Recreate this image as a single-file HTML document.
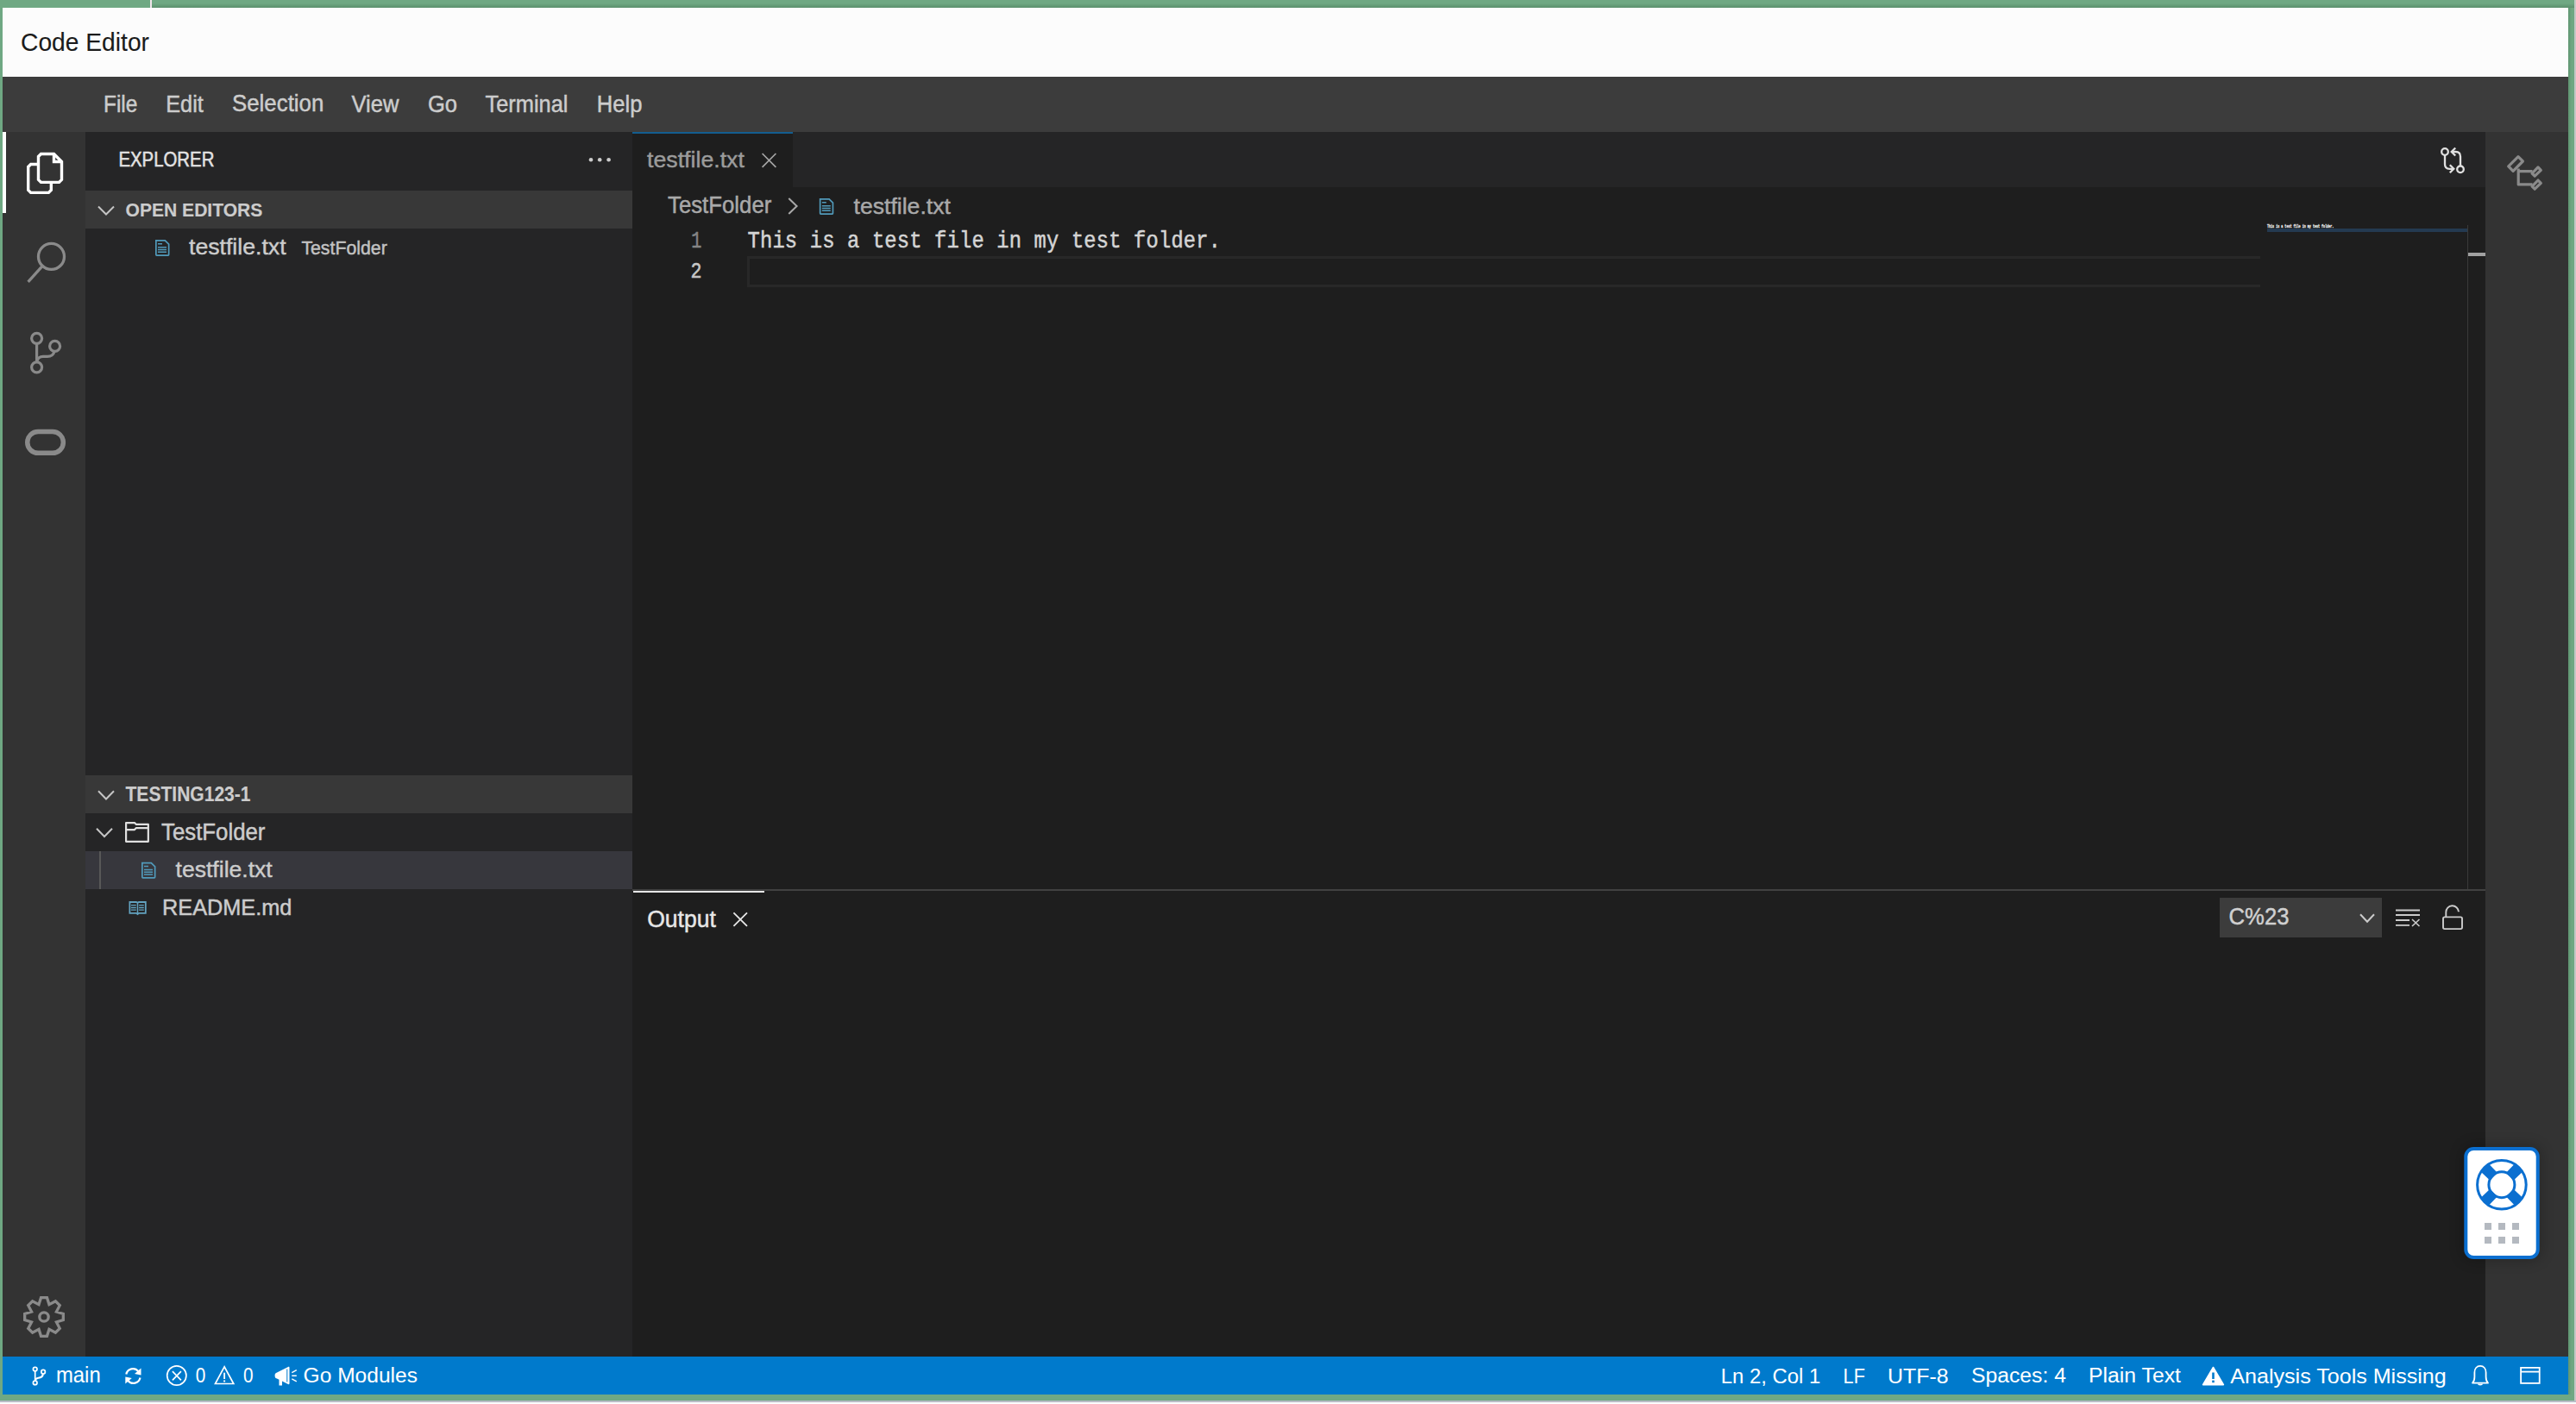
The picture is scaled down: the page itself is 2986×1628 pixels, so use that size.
<!DOCTYPE html>
<html><head><meta charset="utf-8"><title>Code Editor</title>
<style>
html,body{margin:0;padding:0;width:2986px;height:1628px;overflow:hidden;background:#6fa883}
body{position:relative;font-family:"Liberation Sans",sans-serif}
</style></head><body>
<div style="position:absolute;left:0px;top:0px;width:2986px;height:1628px;background:#6fa883;"></div><div style="position:absolute;left:0px;top:1624px;width:2986px;height:2px;background:#b9bdc7;"></div><div style="position:absolute;left:0px;top:1626px;width:2986px;height:2px;background:#fcfcfc;"></div><div style="position:absolute;left:2984px;top:0px;width:2px;height:1624px;background:#c4c8c6;"></div><div style="position:absolute;left:176px;top:4px;width:2808px;height:5px;background:linear-gradient(to bottom, rgba(40,80,50,0) 0%, rgba(40,80,50,0.28) 100%);"></div><div style="position:absolute;left:2977px;top:9px;width:4px;height:1608px;background:linear-gradient(to right, rgba(40,80,50,0.22) 0%, rgba(40,80,50,0) 100%);"></div><div style="position:absolute;left:174px;top:0px;width:2px;height:9px;background:#f1e5eb;"></div><div style="position:absolute;left:3px;top:9px;width:2974px;height:80px;background:#fcfcfc;"></div><div style="position:absolute;left:3px;top:89px;width:2974px;height:64px;background:#3c3c3c;"></div><div style="position:absolute;left:3px;top:153px;width:96px;height:1420px;background:#333333;"></div><div style="position:absolute;left:3px;top:153px;width:4px;height:94px;background:#ffffff;"></div><div style="position:absolute;left:99px;top:153px;width:634px;height:1420px;background:#252526;"></div><div style="position:absolute;left:99px;top:221px;width:634px;height:44px;background:#383838;"></div><div style="position:absolute;left:99px;top:899px;width:634px;height:44px;background:#383838;"></div><div style="position:absolute;left:99px;top:987px;width:634px;height:44px;background:#37373d;"></div><div style="position:absolute;left:115px;top:987px;width:2px;height:44px;background:#585858;"></div><div style="position:absolute;left:733px;top:153px;width:2148px;height:64px;background:#252526;"></div><div style="position:absolute;left:733px;top:153px;width:186px;height:64px;background:#1e1e1e;"></div><div style="position:absolute;left:733px;top:153px;width:186px;height:2px;background:#135d8f;"></div><div style="position:absolute;left:733px;top:217px;width:2148px;height:814px;background:#1e1e1e;"></div><div style="position:absolute;left:866px;top:297px;width:1754px;height:36px;background:transparent;box-sizing:border-box;border:3px solid #282828;border-right:none"></div><div style="position:absolute;left:2628px;top:265px;width:232px;height:4px;background:#243a51;"></div><div style="position:absolute;left:2860px;top:261px;width:1px;height:770px;background:#3a3a3a;"></div><div style="position:absolute;left:2861px;top:293px;width:20px;height:4px;background:#a0a0a0;"></div><div style="position:absolute;left:733px;top:1031px;width:2148px;height:2px;background:#414141;"></div><div style="position:absolute;left:733px;top:1033px;width:2148px;height:540px;background:#1e1e1e;"></div><div style="position:absolute;left:734px;top:1033px;width:152px;height:2px;background:#e7e7e7;"></div><div style="position:absolute;left:2573px;top:1041px;width:188px;height:46px;background:#3c3c3c;"></div><div style="position:absolute;left:2881px;top:153px;width:96px;height:1420px;background:#333333;"></div><div style="position:absolute;left:3px;top:1573px;width:2974px;height:44px;background:#007acc;"></div><div style="position:absolute;left:2856px;top:1330px;width:88px;height:130px;background:transparent;border-radius:11px;box-shadow:0 0 14px 4px rgba(0,0,0,0.18)"></div><span style="position:absolute;left:24.00px;top:35.11px;font-family:'Liberation Sans', sans-serif;font-weight:400;font-size:28.220px;line-height:28.220px;color:#1b1b1b;white-space:pre;transform:scaleY(1.0309);transform-origin:0 23.89px;-webkit-text-stroke:0.1px #1b1b1b;">Code Editor</span><span style="position:absolute;left:120.00px;top:109.51px;font-family:'Liberation Sans', sans-serif;font-weight:400;font-size:24.434px;line-height:24.434px;color:#cccccc;white-space:pre;transform:scaleY(1.1430);transform-origin:0 20.69px;-webkit-text-stroke:0.45px #cccccc;">File</span><span style="position:absolute;left:192.20px;top:108.77px;font-family:'Liberation Sans', sans-serif;font-weight:400;font-size:25.312px;line-height:25.312px;color:#cccccc;white-space:pre;transform:scaleY(1.1033);transform-origin:0 21.43px;-webkit-text-stroke:0.45px #cccccc;">Edit</span><span style="position:absolute;left:269.00px;top:108.31px;font-family:'Liberation Sans', sans-serif;font-weight:400;font-size:25.857px;line-height:25.857px;color:#cccccc;white-space:pre;transform:scaleY(1.0801);transform-origin:0 21.89px;-webkit-text-stroke:0.45px #cccccc;">Selection</span><span style="position:absolute;left:407.50px;top:108.57px;font-family:'Liberation Sans', sans-serif;font-weight:400;font-size:25.552px;line-height:25.552px;color:#cccccc;white-space:pre;transform:scaleY(1.0930);transform-origin:0 21.63px;-webkit-text-stroke:0.45px #cccccc;">View</span><span style="position:absolute;left:495.90px;top:108.57px;font-family:'Liberation Sans', sans-serif;font-weight:400;font-size:25.543px;line-height:25.543px;color:#cccccc;white-space:pre;transform:scaleY(1.0933);transform-origin:0 21.63px;-webkit-text-stroke:0.45px #cccccc;">Go</span><span style="position:absolute;left:562.50px;top:108.70px;font-family:'Liberation Sans', sans-serif;font-weight:400;font-size:25.397px;line-height:25.397px;color:#cccccc;white-space:pre;transform:scaleY(1.0996);transform-origin:0 21.50px;-webkit-text-stroke:0.45px #cccccc;">Terminal</span><span style="position:absolute;left:691.80px;top:108.55px;font-family:'Liberation Sans', sans-serif;font-weight:400;font-size:25.565px;line-height:25.565px;color:#cccccc;white-space:pre;transform:scaleY(1.0924);transform-origin:0 21.65px;-webkit-text-stroke:0.45px #cccccc;">Help</span><span style="position:absolute;left:137.40px;top:176.13px;font-family:'Liberation Sans', sans-serif;font-weight:400;font-size:20.395px;line-height:20.395px;color:#e2e2e2;white-space:pre;transform:scaleY(1.1482);transform-origin:0 17.27px;-webkit-text-stroke:0.45px #e2e2e2;">EXPLORER</span><span style="position:absolute;left:145.50px;top:233.15px;font-family:'Liberation Sans', sans-serif;font-weight:700;font-size:21.088px;line-height:21.088px;color:#cccccc;white-space:pre;transform:scaleY(1.0829);transform-origin:0 17.85px;-webkit-text-stroke:0.15px #cccccc;">OPEN EDITORS</span><span style="position:absolute;left:219.00px;top:273.22px;font-family:'Liberation Sans', sans-serif;font-weight:400;font-size:26.675px;line-height:26.675px;color:#cccccc;white-space:pre;transform:scaleY(0.9514);transform-origin:0 22.58px;-webkit-text-stroke:0.45px #cccccc;">testfile.txt</span><span style="position:absolute;left:349.40px;top:277.77px;font-family:'Liberation Sans', sans-serif;font-weight:400;font-size:21.296px;line-height:21.296px;color:#c2c2c2;white-space:pre;transform:scaleY(1.0792);transform-origin:0 18.03px;-webkit-text-stroke:0.45px #c2c2c2;">TestFolder</span><span style="position:absolute;left:145.50px;top:911.18px;font-family:'Liberation Sans', sans-serif;font-weight:700;font-size:21.052px;line-height:21.052px;color:#cccccc;white-space:pre;transform:scaleY(1.1193);transform-origin:0 17.82px;-webkit-text-stroke:0.15px #cccccc;">TESTING123-1</span><span style="position:absolute;left:187.00px;top:952.74px;font-family:'Liberation Sans', sans-serif;font-weight:400;font-size:25.817px;line-height:25.817px;color:#cccccc;white-space:pre;transform:scaleY(1.1043);transform-origin:0 21.86px;-webkit-text-stroke:0.45px #cccccc;">TestFolder</span><span style="position:absolute;left:203.50px;top:995.00px;font-family:'Liberation Sans', sans-serif;font-weight:400;font-size:26.580px;line-height:26.580px;color:#cccccc;white-space:pre;transform:scaleY(0.9808);transform-origin:0 22.50px;-webkit-text-stroke:0.45px #cccccc;">testfile.txt</span><span style="position:absolute;left:188.00px;top:1040.27px;font-family:'Liberation Sans', sans-serif;font-weight:400;font-size:25.315px;line-height:25.315px;color:#cccccc;white-space:pre;transform:scaleY(1.0457);transform-origin:0 21.43px;-webkit-text-stroke:0.45px #cccccc;">README.md</span><span style="position:absolute;left:750.00px;top:172.26px;font-family:'Liberation Sans', sans-serif;font-weight:400;font-size:26.746px;line-height:26.746px;color:#9b9b9b;white-space:pre;transform:scaleY(0.9541);transform-origin:0 22.64px;-webkit-text-stroke:0.45px #9b9b9b;">testfile.txt</span><span style="position:absolute;left:774.00px;top:226.46px;font-family:'Liberation Sans', sans-serif;font-weight:400;font-size:25.795px;line-height:25.795px;color:#a9a9a9;white-space:pre;transform:scaleY(1.0883);transform-origin:0 21.84px;-webkit-text-stroke:0.45px #a9a9a9;">TestFolder</span><span style="position:absolute;left:989.50px;top:225.66px;font-family:'Liberation Sans', sans-serif;font-weight:400;font-size:26.627px;line-height:26.627px;color:#a9a9a9;white-space:pre;transform:scaleY(0.9946);transform-origin:0 22.54px;-webkit-text-stroke:0.45px #a9a9a9;">testfile.txt</span><span style="position:absolute;left:801.30px;top:271.55px;font-family:'Liberation Mono', monospace;font-weight:400;font-size:20.167px;line-height:20.167px;color:#858585;white-space:pre;transform:scaleY(1.3349);transform-origin:0 15.45px;-webkit-text-stroke:0.45px #858585;">1</span><span style="position:absolute;left:800.40px;top:305.80px;font-family:'Liberation Mono', monospace;font-weight:400;font-size:21.667px;line-height:21.667px;color:#c6c6c6;white-space:pre;transform:scaleY(1.2214);transform-origin:0 16.60px;-webkit-text-stroke:0.45px #c6c6c6;">2</span><span style="position:absolute;left:866.50px;top:268.71px;font-family:'Liberation Mono', monospace;font-weight:400;font-size:23.876px;line-height:23.876px;color:#d4d4d4;white-space:pre;transform:scaleY(1.1657);transform-origin:0 18.29px;-webkit-text-stroke:0.45px #d4d4d4;letter-spacing:0.12px">This is a test file in my test folder.</span><span style="position:absolute;left:750.20px;top:1052.73px;font-family:'Liberation Sans', sans-serif;font-weight:400;font-size:26.545px;line-height:26.545px;color:#e7e7e7;white-space:pre;transform:scaleY(1.0631);transform-origin:0 22.47px;-webkit-text-stroke:0.45px #e7e7e7;">Output</span><span style="position:absolute;left:2583.60px;top:1051.49px;font-family:'Liberation Sans', sans-serif;font-weight:400;font-size:25.638px;line-height:25.638px;color:#d0d0d0;white-space:pre;transform:scaleY(1.0893);transform-origin:0 21.71px;-webkit-text-stroke:0.45px #d0d0d0;">C%23</span><span style="position:absolute;left:65.00px;top:1583.30px;font-family:'Liberation Sans', sans-serif;font-weight:400;font-size:23.852px;line-height:23.852px;color:#ffffff;white-space:pre;transform:scaleY(1.0730);transform-origin:0 20.20px;-webkit-text-stroke:0.05px #ffffff;">main</span><span style="position:absolute;left:226.80px;top:1586.46px;font-family:'Liberation Sans', sans-serif;font-weight:400;font-size:20.721px;line-height:20.721px;color:#ffffff;white-space:pre;transform:scaleY(1.1934);transform-origin:0 17.54px;-webkit-text-stroke:0.05px #ffffff;">0</span><span style="position:absolute;left:281.90px;top:1586.46px;font-family:'Liberation Sans', sans-serif;font-weight:400;font-size:20.721px;line-height:20.721px;color:#ffffff;white-space:pre;transform:scaleY(1.1934);transform-origin:0 17.54px;-webkit-text-stroke:0.05px #ffffff;">0</span><span style="position:absolute;left:351.60px;top:1583.01px;font-family:'Liberation Sans', sans-serif;font-weight:400;font-size:24.553px;line-height:24.553px;color:#ffffff;white-space:pre;transform:scaleY(0.9953);transform-origin:0 20.79px;-webkit-text-stroke:0.05px #ffffff;">Go Modules</span><span style="position:absolute;left:1994.70px;top:1583.75px;font-family:'Liberation Sans', sans-serif;font-weight:400;font-size:23.917px;line-height:23.917px;color:#ffffff;white-space:pre;transform:scaleY(1.0156);transform-origin:0 20.25px;-webkit-text-stroke:0.05px #ffffff;">Ln 2, Col 1</span><span style="position:absolute;left:2136.60px;top:1585.65px;font-family:'Liberation Sans', sans-serif;font-weight:400;font-size:21.670px;line-height:21.670px;color:#ffffff;white-space:pre;transform:scaleY(1.1209);transform-origin:0 18.35px;-webkit-text-stroke:0.05px #ffffff;">LF</span><span style="position:absolute;left:2188.00px;top:1582.87px;font-family:'Liberation Sans', sans-serif;font-weight:400;font-size:24.960px;line-height:24.960px;color:#ffffff;white-space:pre;transform:scaleY(0.9732);transform-origin:0 21.13px;-webkit-text-stroke:0.05px #ffffff;">UTF-8</span><span style="position:absolute;left:2285.00px;top:1583.06px;font-family:'Liberation Sans', sans-serif;font-weight:400;font-size:24.733px;line-height:24.733px;color:#ffffff;white-space:pre;transform:scaleY(0.9821);transform-origin:0 20.94px;-webkit-text-stroke:0.05px #ffffff;">Spaces: 4</span><span style="position:absolute;left:2421.00px;top:1583.02px;font-family:'Liberation Sans', sans-serif;font-weight:400;font-size:24.783px;line-height:24.783px;color:#ffffff;white-space:pre;transform:scaleY(0.9801);transform-origin:0 20.98px;-webkit-text-stroke:0.05px #ffffff;">Plain Text</span><span style="position:absolute;left:2585.30px;top:1582.76px;font-family:'Liberation Sans', sans-serif;font-weight:400;font-size:25.088px;line-height:25.088px;color:#ffffff;white-space:pre;transform:scaleY(0.9856);transform-origin:0 21.24px;-webkit-text-stroke:0.05px #ffffff;">Analysis Tools Missing</span><span style="position:absolute;left:2628px;top:258.6px;font-family:'Liberation Mono',monospace;font-size:3.4px;line-height:6px;color:#dcdcdc;white-space:pre;transform:scaleY(1.35);transform-origin:0 0;-webkit-text-stroke:0.35px #dcdcdc">This is a test file in my test folder.</span>
<svg width="2986" height="1628" viewBox="0 0 2986 1628" style="position:absolute;left:0;top:0"><g fill="none" stroke="#ffffff" stroke-width="3.4" stroke-linejoin="miter"><path d="M47.5 178.45 H62.5 L71.5 187.5 V208.35 L68.5 211.35 H47.5 L44.5 208.35 V181.45 Z"/><path d="M62.5 178.45 V187.5 H71.5"/><path d="M44.5 190.5 H35.7 L32.7 193.5 V220.35 L35.7 223.35 H56.35 L59.35 220.35 V211.35"/></g><g fill="none" stroke="#8a8a8a" stroke-width="3.3"><circle cx="59.5" cy="297.4" r="15"/><path d="M49 308.6 L32.6 326.8"/></g><g fill="none" stroke="#8a8a8a" stroke-width="3.2"><circle cx="42.6" cy="392.3" r="6"/><circle cx="63.6" cy="401.4" r="6"/><circle cx="42.6" cy="425.8" r="6"/><path d="M42.6 398.3 V419.8"/><path d="M63.2 407.4 C62 411.5 59 413.4 55 413.4 H50 C46 413.4 43.5 416 42.8 419"/></g><rect x="31.75" y="500.45" width="41.6" height="24.9" rx="12.45" fill="none" stroke="#8a8a8a" stroke-width="5.5"/><g fill="none" stroke="#8a8a8a" stroke-width="3.3" stroke-linejoin="miter"><path d="M45.03 1512.59 L47.54 1504.67 L54.46 1504.67 L56.97 1512.59 L64.35 1508.76 L69.24 1513.65 L65.41 1521.03 L73.33 1523.54 L73.33 1530.46 L65.41 1532.97 L69.24 1540.35 L64.35 1545.24 L56.97 1541.41 L54.46 1549.33 L47.54 1549.33 L45.03 1541.41 L37.65 1545.24 L32.76 1540.35 L36.59 1532.97 L28.67 1530.46 L28.67 1523.54 L36.59 1521.03 L32.76 1513.65 L37.65 1508.76 Z"/><circle cx="51" cy="1527" r="5.2"/></g><g transform="translate(180 278)" fill="none" stroke="#519aba"><path stroke-width="1.7" d="M0.85 0.85 H11.3 L15.65 5.2 V17.3 C15.65 17.8 15.4 18.15 14.9 18.15 H1.6 C1.1 18.15 0.85 17.8 0.85 17.3 Z"/><path stroke-width="1.5" d="M3 4.7 H8 M3 8.8 H13 M3 11.5 H13 M3 14.2 H13"/></g><g transform="translate(164 999.7)" fill="none" stroke="#519aba"><path stroke-width="1.7" d="M0.85 0.85 H11.3 L15.65 5.2 V17.3 C15.65 17.8 15.4 18.15 14.9 18.15 H1.6 C1.1 18.15 0.85 17.8 0.85 17.3 Z"/><path stroke-width="1.5" d="M3 4.7 H8 M3 8.8 H13 M3 11.5 H13 M3 14.2 H13"/></g><g transform="translate(949.8 230)" fill="none" stroke="#519aba"><path stroke-width="1.7" d="M0.85 0.85 H11.3 L15.65 5.2 V17.3 C15.65 17.8 15.4 18.15 14.9 18.15 H1.6 C1.1 18.15 0.85 17.8 0.85 17.3 Z"/><path stroke-width="1.5" d="M3 4.7 H8 M3 8.8 H13 M3 11.5 H13 M3 14.2 H13"/></g><g fill="none" stroke="#e0e0e0" stroke-width="2.2" stroke-linejoin="round"><path d="M146.1 975.85 V954.05 H156 L157.9 955.95 H171.85 V975.85 Z"/><path d="M146.1 962.1 H156 L157.9 960.1 H171.85"/></g><g fill="none" stroke="#62a2bf"><path stroke-width="1.8" d="M150.4 1046 H158 L159.5 1046.8 L161 1046 H168.8 V1058.85 H161 L159.5 1060 L158 1058.85 H150.4 Z"/><path stroke-width="1.5" d="M159.5 1047 V1059"/><path stroke-width="1.3" d="M152 1049.7 H157.8 M152 1052.5 H157.8 M152 1055.1 H157.8 M161.1 1049.7 H166.8 M161.1 1052.5 H166.8 M161.1 1055.1 H166.8"/></g><g fill="none" stroke="#c5c5c5" stroke-width="2"><path d="M114 239.5 L123 248.5 L132 239.5"/><path d="M114 917.3 L123 926.5 L132 917.3"/><path d="M112 960.7 L121 970 L130 960.7"/></g><path d="M2736 1060.3 L2744 1068.8 L2752 1060.3" fill="none" stroke="#cccccc" stroke-width="2"/><g fill="#cccccc"><circle cx="685" cy="185.2" r="2.3"/><circle cx="695.2" cy="185.2" r="2.3"/><circle cx="705.6" cy="185.2" r="2.3"/></g><path d="M914.3 230 L923.6 239 L914.3 248" fill="none" stroke="#a9a9a9" stroke-width="2"/><path d="M883.6 178 L899.4 193.8 M899.4 178 L883.6 193.8" fill="none" stroke="#a6a6a6" stroke-width="1.7"/><path d="M850.4 1058.3 L866 1073.8 M866 1058.3 L850.4 1073.8" fill="none" stroke="#e7e7e7" stroke-width="1.8"/><g fill="none" stroke="#e0e0e0" stroke-width="2.3" stroke-linecap="butt"><circle cx="2834" cy="176" r="3.8"/><circle cx="2852" cy="196.3" r="3.8"/><path d="M2834 180 V190.5 C2834 194 2836 195.8 2839.5 195.8 H2844"/><path d="M2839.8 191.3 L2844.3 195.8 L2839.8 200.3"/><path d="M2852 192.3 V181.5 C2852 178 2850 176 2846.5 176 H2842"/><path d="M2846.2 171.5 L2841.7 176 L2846.2 180.5"/></g><g fill="none" stroke="#8a8a8a" stroke-width="3.2" stroke-linejoin="round"><path d="M2907.7 192.9 L2919 181.7 L2924.4 187 L2913.1 198.3 Z"/><path d="M2919.2 195.5 V213.9 H2935.5 M2919.2 198.7 H2935.5"/><path d="M2935.1 201 L2942 193.9 L2945.3 197.3 L2938.2 204.1 Z"/><path d="M2935.1 216.1 L2942 209 L2945.3 212.4 L2938.2 219.2 Z"/></g><g fill="none" stroke="#cccccc" stroke-width="1.8"><path d="M2777 1055.5 H2805 M2777 1061 H2805 M2777 1067 H2793 M2777 1072.8 H2793"/><path stroke-width="1.6" d="M2796 1066 L2804.5 1074 M2804.5 1066 L2796 1074"/></g><g fill="none" stroke="#cccccc" stroke-width="1.9"><rect x="2832" y="1063.4" width="22" height="13.7" rx="1.8"/><path d="M2835.3 1063.4 V1057.8 A7.3 7.3 0 0 1 2849.9 1057.3 V1056"/></g><g fill="none" stroke="#ffffff" stroke-width="1.7"><circle cx="40.7" cy="1587.6" r="2.3"/><circle cx="50.1" cy="1590.7" r="2.3"/><circle cx="40.7" cy="1603.4" r="2.3"/><path d="M40.7 1590 V1601"/><path stroke-width="2" d="M50 1593 C49.5 1596.5 47.5 1597.5 44.5 1597.8 C42 1598 41 1599.5 40.9 1601"/></g><g fill="none" stroke="#ffffff" stroke-width="2.2"><path d="M146.3 1593.5 A8 8 0 0 1 160.3 1590"/><path d="M162.5 1597.5 A8 8 0 0 1 148.5 1601"/></g><g fill="#ffffff"><path d="M163.5 1586.5 L163.5 1594.5 L156 1593 Z"/><path d="M145.3 1604.5 L145.3 1596.5 L152.8 1598 Z"/></g><g fill="none" stroke="#ffffff" stroke-width="1.7"><circle cx="204.8" cy="1595" r="11.1"/><path d="M199.9 1590.2 L209.9 1600.4 M209.9 1590.2 L199.9 1600.4"/></g><g fill="none" stroke="#ffffff" stroke-width="1.7" stroke-linejoin="miter"><path d="M260.1 1584.8 L249.5 1604.5 H270.8 Z"/><path stroke-width="1.9" d="M260.1 1591.7 V1599"/></g><rect x="259.1" y="1600.5" width="2" height="1.9" fill="#ffffff"/><g fill="#ffffff"><path d="M321 1591.5 L334 1585 C335 1584.5 335.5 1585 335.5 1586 V1604 C335.5 1605 335 1605.5 334 1605 L327 1601.5 V1606.6 H323.5 V1599.8 L321 1598.6 C318.8 1598 318.6 1596.5 318.6 1595 C318.6 1593.5 318.8 1592.2 321 1591.5 Z"/></g><path d="M332.8 1587.5 V1602.5" stroke="#007acc" stroke-width="1"/><g stroke="#ffffff" stroke-width="1.4"><path d="M338.3 1591.6 L343.8 1588.6 M338.3 1595.2 H343.8 M338.3 1598.8 L343.8 1601.8"/></g><path d="M2565.5 1585.5 L2553.6 1605.6 H2577.4 Z" fill="#ffffff" stroke="#ffffff" stroke-width="1.6" stroke-linejoin="round"/><rect x="2564.2" y="1591.5" width="2.6" height="7.5" fill="#007acc"/><rect x="2564.2" y="1600.6" width="2.6" height="2.6" fill="#007acc"/><g fill="none" stroke="#ffffff" stroke-width="1.8" stroke-linejoin="round"><path d="M2866 1603.6 C2868 1601.8 2868.4 1599.5 2868.4 1596.5 V1591.5 C2868.4 1587 2871 1583.8 2875 1583.8 C2879 1583.8 2881.6 1587 2881.6 1591.5 V1596.5 C2881.6 1599.5 2882 1601.8 2884 1603.6 Z"/><path d="M2872.8 1604.6 C2873 1606 2877 1606 2877.2 1604.6"/></g><g fill="none" stroke="#ffffff" stroke-width="1.8"><rect x="2922.1" y="1585.9" width="21.6" height="18"/><path stroke-width="1.8" d="M2922.1 1590.6 H2943.7"/></g><rect x="2858.3" y="1332" width="83.4" height="126" rx="9" fill="#ffffff" stroke="#0b6fd0" stroke-width="4"/><g fill="none" stroke="#0b6fd0" stroke-width="3"><circle cx="2899.9" cy="1373.7" r="28.3"/><circle cx="2899.9" cy="1373.7" r="15"/></g><path d="M2904.86 1387.33 L2915.16 1398.12 L2924.32 1388.96 L2913.53 1378.66 Z M2886.27 1378.66 L2875.48 1388.96 L2884.64 1398.12 L2894.94 1387.33 Z M2894.94 1360.07 L2884.64 1349.28 L2875.48 1358.44 L2886.27 1368.74 Z M2913.53 1368.74 L2924.32 1358.44 L2915.16 1349.28 L2904.86 1360.07 Z" fill="#0b6fd0"/><g fill="#b4b9c0"><rect x="2880" y="1418" width="8" height="8"/><rect x="2896" y="1418" width="8" height="8"/><rect x="2912" y="1418" width="8" height="8"/><rect x="2880" y="1434" width="8" height="8"/><rect x="2896" y="1434" width="8" height="8"/><rect x="2912" y="1434" width="8" height="8"/></g></svg>
</body></html>
